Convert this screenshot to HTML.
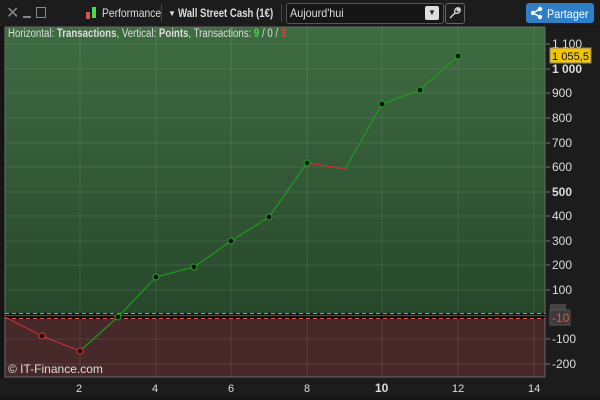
<!DOCTYPE html>
<html><head><style>
body{margin:0;width:600px;height:400px;background:#151515;overflow:hidden;font-family:"Liberation Sans",sans-serif;position:relative}
.tb{position:absolute;left:0;top:0;width:600px;height:26px;background:#1c1c1c;color:#ddd;font-size:12px}
.tb span{position:absolute;top:6px;white-space:nowrap;transform-origin:left center}
</style></head><body>
<div class="tb">
<span style="left:6px;top:3px;color:#888;font-size:16px">✕</span>
<div style="position:absolute;left:23px;top:16px;width:8px;height:2px;background:#888"></div>
<div style="position:absolute;left:36px;top:7px;width:8px;height:9px;border:1px solid #888"></div>
<div style="position:absolute;left:86px;top:12px;width:4px;height:7px;background:#e05050"></div>
<div style="position:absolute;left:92px;top:7px;width:4px;height:11px;background:#4ed84e"></div>
<span style="left:102px;transform:scaleX(0.86)">Performance</span>
<div style="position:absolute;left:161px;top:4px;width:1px;height:18px;background:#444"></div>
<span style="left:168px;font-size:8px;top:9px">▼</span>
<span style="left:178px;font-weight:bold;transform:scaleX(0.8)">Wall Street Cash (1€)</span>
<div style="position:absolute;left:281px;top:4px;width:1px;height:18px;background:#444"></div>
<div style="position:absolute;left:286px;top:3px;width:156px;height:19px;border:1px solid #555;border-radius:3px;background:#161616"></div>
<span style="left:290px;top:6px;transform:scaleX(0.9)">Aujourd'hui</span>
<div style="position:absolute;left:425px;top:6px;width:14px;height:14px;background:#ddd;border-radius:2px;color:#222;font-size:8px;text-align:center;line-height:14px">▼</div>
<div style="position:absolute;left:445px;top:3px;width:18px;height:19px;border:1px solid #666;border-radius:3px"></div>
<svg style="position:absolute;left:448px;top:6px" width="14" height="14"><path d="M2 12L7 7M7 7C6 4 8 1 11 2L9 4L10 5L12 3C13 6 10 8 7 7" stroke="#ddd" stroke-width="1.3" fill="none"/></svg>
<div style="position:absolute;left:526px;top:3px;width:68px;height:20px;background:#2f7fc6;border-radius:3px"></div>
<svg style="position:absolute;left:530px;top:6px" width="14" height="14"><circle cx="10" cy="3" r="2.2" fill="#fff"/><circle cx="3" cy="7" r="2.2" fill="#fff"/><circle cx="10" cy="11" r="2.2" fill="#fff"/><path d="M10 3L3 7L10 11" stroke="#fff" stroke-width="1.3" fill="none"/></svg>
<span style="left:547px;top:7px;color:#fff;transform:scaleX(0.9)">Partager</span>
</div>
<svg style="position:absolute;left:0;top:0" width="600" height="400">
<defs><linearGradient id="g" x1="0" y1="0" x2="0" y2="1"><stop offset="0" stop-color="#3f6c42"/><stop offset="1" stop-color="#27472b"/></linearGradient></defs>
<rect x="5" y="27" width="540" height="288" fill="url(#g)"/>
<rect x="5" y="315" width="540" height="62" fill="#47292a"/>
<rect x="5" y="27" width="540" height="350" fill="none" stroke="#6a6a6a" stroke-width="1"/>
<g stroke="rgba(255,255,255,0.09)" stroke-width="1">
<line x1="80" y1="27" x2="80" y2="377"/><line x1="156" y1="27" x2="156" y2="377"/><line x1="231" y1="27" x2="231" y2="377"/><line x1="307" y1="27" x2="307" y2="377"/><line x1="382" y1="27" x2="382" y2="377"/><line x1="458" y1="27" x2="458" y2="377"/><line x1="534" y1="27" x2="534" y2="377"/>
<line x1="5" y1="44" x2="545" y2="44"/><line x1="5" y1="69" x2="545" y2="69"/><line x1="5" y1="93" x2="545" y2="93"/><line x1="5" y1="118" x2="545" y2="118"/><line x1="5" y1="143" x2="545" y2="143"/><line x1="5" y1="167" x2="545" y2="167"/><line x1="5" y1="192" x2="545" y2="192"/><line x1="5" y1="216" x2="545" y2="216"/><line x1="5" y1="241" x2="545" y2="241"/><line x1="5" y1="265" x2="545" y2="265"/><line x1="5" y1="290" x2="545" y2="290"/><line x1="5" y1="339" x2="545" y2="339"/><line x1="5" y1="364" x2="545" y2="364"/>
</g>
<rect x="5" y="313" width="540" height="6" fill="#111"/>
<line x1="5" y1="313.5" x2="545" y2="313.5" stroke="#4ecf4e" stroke-dasharray="4,3"/>
<line x1="5" y1="315.5" x2="545" y2="315.5" stroke="#3a3aff"/>
<line x1="5" y1="318.5" x2="545" y2="318.5" stroke="#e05050" stroke-dasharray="4,3"/>
<polyline points="5,317 42,336 80,351" fill="none" stroke="#c83030" stroke-width="1.2"/>
<polyline points="80,351 118,317 156,277 194,267 231,241 269,217 307,163" fill="none" stroke="#1e9a1e" stroke-width="1.2"/>
<polyline points="307,163 345,169" fill="none" stroke="#c83030" stroke-width="1.2"/>
<polyline points="345,169 382,104 420,90 458,56" fill="none" stroke="#1e9a1e" stroke-width="1.2"/>
<g fill="#111" stroke-width="1.2">
<circle cx="42" cy="336" r="3" stroke="#c83030"/><circle cx="80" cy="351" r="3" stroke="#c83030"/>
<circle cx="118" cy="317" r="3" stroke="#1e9a1e"/><circle cx="156" cy="277" r="3" stroke="#1e9a1e"/><circle cx="194" cy="267" r="3" stroke="#1e9a1e"/><circle cx="231" cy="241" r="3" stroke="#1e9a1e"/><circle cx="269" cy="217" r="3" stroke="#1e9a1e"/><circle cx="307" cy="163" r="3" stroke="#1e9a1e"/><circle cx="382" cy="104" r="3" stroke="#1e9a1e"/><circle cx="420" cy="90" r="3" stroke="#1e9a1e"/><circle cx="458" cy="56" r="3" stroke="#1e9a1e"/>
</g>
<rect x="546" y="27" width="54" height="351" fill="#1c1c1c"/>
<rect x="0" y="378" width="600" height="18" fill="#1c1c1c"/>
<g fill="#ddd" font-family="Liberation Sans" font-size="12">
<g stroke="#777"><line x1="546" y1="44" x2="550" y2="44"/><line x1="546" y1="69" x2="550" y2="69"/><line x1="546" y1="93" x2="550" y2="93"/><line x1="546" y1="118" x2="550" y2="118"/><line x1="546" y1="143" x2="550" y2="143"/><line x1="546" y1="167" x2="550" y2="167"/><line x1="546" y1="192" x2="550" y2="192"/><line x1="546" y1="216" x2="550" y2="216"/><line x1="546" y1="241" x2="550" y2="241"/><line x1="546" y1="265" x2="550" y2="265"/><line x1="546" y1="290" x2="550" y2="290"/><line x1="546" y1="339" x2="550" y2="339"/><line x1="546" y1="364" x2="550" y2="364"/></g>
<text x="552" y="48">1 100</text><text x="552" y="73" font-weight="bold">1 000</text><text x="552" y="97">900</text><text x="552" y="122">800</text><text x="552" y="147">700</text><text x="552" y="171">600</text><text x="552" y="196" font-weight="bold">500</text><text x="552" y="220">400</text><text x="552" y="245">300</text><text x="552" y="269">200</text><text x="552" y="294">100</text><text x="552" y="343">-100</text><text x="552" y="368">-200</text>
<text x="76" y="392" font-size="11">2</text><text x="152" y="392" font-size="11">4</text><text x="228" y="392" font-size="11">6</text><text x="304" y="392" font-size="11">8</text><text x="375" y="392" font-weight="bold">10</text><text x="452" y="392" font-size="11">12</text><text x="528" y="392" font-size="11">14</text>
</g>
<rect x="550" y="48" width="41" height="15" fill="#f3c400" stroke="#888"/>
<text x="552" y="60" font-family="Liberation Sans" font-size="11" fill="#111" textLength="37" lengthAdjust="spacingAndGlyphs">1 055,5</text>
<rect x="550" y="304" width="16" height="10" fill="#444"/>
<rect x="550" y="310" width="20" height="15" fill="#3a3a3a" stroke="#555"/>
<text x="552" y="322" font-family="Liberation Sans" font-size="12" fill="#e05050">-10</text>
<text x="8" y="373" font-family="Liberation Sans" font-size="12" fill="#ddd">© IT-Finance.com</text>
</svg>
<div style="position:absolute;left:8px;top:28px;font-size:11.5px;color:#ddd;white-space:nowrap;transform:scaleX(0.84);transform-origin:left top">Horizontal: <b>Transactions</b>, Vertical: <b>Points</b>, Transactions: <b style="color:#4ecf4e">9</b> / 0 / <b style="color:#e04040">3</b></div>
</body></html>
